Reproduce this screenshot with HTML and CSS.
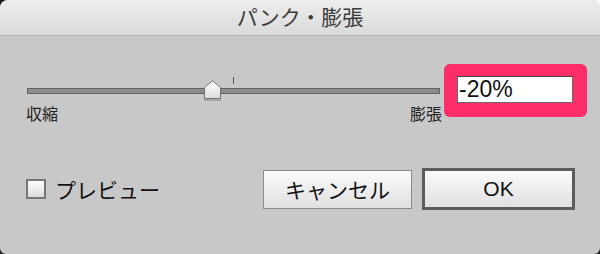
FILE: index.html
```html
<!DOCTYPE html>
<html lang="ja">
<head>
  <meta charset="UTF-8" />
  <title>パンク・膨張</title>
  <link rel="stylesheet" href="styles.css">
</head>
<body>
  <div class="dialog">
    <div class="title-bar">パンク・膨張</div>
    <div class="dialog-body">
      <div class="amount-row">
        <div class="slider-group">
          <div class="slider">
            <div class="slider-track"></div>
            <span class="slider-tick"></span>
            <svg class="slider-thumb" width="17" height="21" viewBox="0 0 17 21">
              <defs>
                <linearGradient id="thumbFill" x1="0" y1="0" x2="0" y2="1">
                  <stop offset="0" stop-color="#ffffff" />
                  <stop offset="1" stop-color="#dcdcdc" />
                </linearGradient>
              </defs>
              <rect x="0" y="15" width="17" height="6" fill="#a6a6a6" />
              <path d="M0.5 7.5 L8.5 0.7 L16.5 7.5 L16.5 18.5 L0.5 18.5 Z" fill="url(#thumbFill)" stroke="#727272" />
            </svg>
          </div>
          <div class="slider-labels">
            <span>収縮</span>
            <span>膨張</span>
          </div>
        </div>
        <div class="value-highlight">
          <input class="value-field" type="text" value="-20%">
        </div>
      </div>
      <div class="button-row">
        <label class="preview"><span class="checkbox"></span>プレビュー</label>
        <button class="btn btn-cancel">キャンセル</button>
        <button class="btn btn-ok">OK</button>
      </div>
    </div>
  </div>
</body>
</html>
```

FILE: styles.css
```css
body {
  margin: 0;
  width: 600px;
  height: 254px;
  font-family: "Liberation Sans", "Noto Sans CJK JP", sans-serif;
  background:
    linear-gradient(to bottom, transparent 50%, #1a1a1a 50%),
    linear-gradient(to right, #1a1a1a 50%, #ffffff 50%);
}

.dialog {
  width: 600px;
  height: 254px;
  background-color: #c8c8c8;
  border-radius: 8px 8px 6px 6px;
  overflow: hidden;
}

.title-bar {
  height: 35px;
  line-height: 35px;
  text-align: center;
  font-size: 21px;
  color: #3c3c3c;
  background: linear-gradient(#ededed, #dadada);
  border-bottom: 1px solid #b0b0b0;
}

.dialog-body {
  padding: 28px 13px 0 26px;
}

.amount-row {
  display: flex;
  align-items: flex-start;
}

.slider-group {
  width: 416px;
  padding-top: 13px;
}

.slider {
  position: relative;
  height: 10px;
  padding-top: 11px;
}

.slider-track {
  height: 6px;
  margin: 0 2px 0 1px;
  box-sizing: border-box;
  border: 1px solid #636363;
  background-color: #8c8c8c;
}

.slider-tick {
  position: absolute;
  left: 207px;
  top: 0;
  width: 1px;
  height: 7px;
  background-color: #555;
}

.slider-thumb {
  position: absolute;
  left: 178px;
  top: 3px;
  display: block;
}

.slider-labels {
  display: flex;
  justify-content: space-between;
  margin-top: 8px;
  font-size: 16px;
  line-height: 18px;
  color: #222;
}

.value-highlight {
  margin-left: 2px;
  width: 143px;
  height: 53px;
  box-sizing: border-box;
  padding: 12px 0 0 13px;
  background-color: #fd2d6a;
  border-radius: 6px;
}

.value-field {
  display: block;
  width: 116px;
  height: 27px;
  box-sizing: border-box;
  margin: 0;
  padding: 0 0 0 1px;
  border: 1px solid #6a6a6a;
  border-top-color: #444;
  background-color: #fff;
  font-family: "Liberation Sans", sans-serif;
  font-size: 23px;
  color: #111;
  outline: none;
}

.button-row {
  display: flex;
  align-items: center;
  margin-top: 44px;
  padding-right: 12px;
}

.preview {
  display: flex;
  align-items: center;
  gap: 9px;
  font-size: 21px;
  color: #111;
}

.checkbox {
  width: 20px;
  height: 20px;
  box-sizing: border-box;
  border: 2px solid #767676;
  background: linear-gradient(#fdfdfd, #dcdcdc);
}

.btn {
  padding: 0;
  font-family: inherit;
  font-size: 21px;
  color: #111;
  background: linear-gradient(#fbfbfb, #e0e0e0);
}

.btn-cancel {
  margin-left: auto;
  width: 149px;
  height: 39px;
  border: 1px solid #8a8a8a;
}

.btn-ok {
  margin-left: 10px;
  width: 153px;
  height: 42px;
  border: 3px solid #5c5c5c;
}
```
